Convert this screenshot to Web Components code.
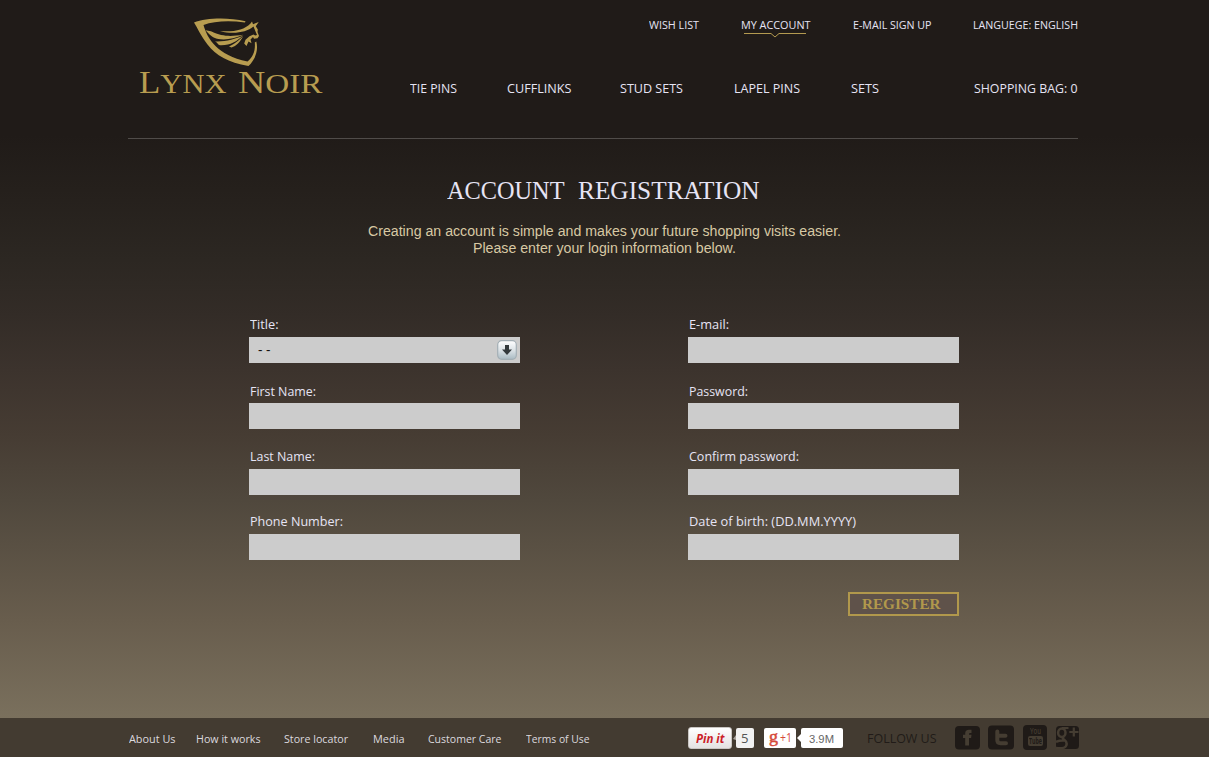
<!DOCTYPE html>
<html lang="en">
<head>
<meta charset="utf-8">
<title>Lynx Noir - Account Registration</title>
<style>
html,body{margin:0;padding:0}
body{font-family:"Open Sans",sans-serif;color:#e6e4f4;background:#201b18}
</style>
</head>
<body>
<lynx-page></lynx-page>
<script>
const define=(name,html,after)=>customElements.define(name,class extends HTMLElement{
  connectedCallback(){
    if(this.shadowRoot)return;
    this.attachShadow({mode:'open'}).innerHTML=typeof html==='function'?html(this):html;
    if(after)after(this);
  }
});

/* A single line of text condensed or expanded to the width in its w attribute */
define('fit-text',`<style>
:host{display:block;height:var(--line,20px);flex:none}
span{display:block;width:max-content;line-height:var(--line,20px);white-space:pre;transform-origin:0 0}
</style><span><slot></slot></span>`,el=>{
  const w=+el.getAttribute('w'),s=el.shadowRoot.querySelector('span');
  el.style.width=w+'px';
  const n=s.getBoundingClientRect().width;
  if(n)s.style.transform='scaleX('+(w/n)+')';
});

define('lynx-logo',`<style>
:host{display:block;width:200px;height:100px;color:#b89d50}
svg{display:block;margin:18px 0 0 65px}
.name{display:flex;align-items:baseline;margin:-2px 0 0 11px;font-family:"Liberation Serif",serif;font-size:28px;gap:11px}
fit-text{--line:34px} b{font-weight:400;font-size:32px}
</style>
<svg width="70" height="49" viewBox="0 0 70 49" fill="#b89d50">
<path d="M1 4.500C13 0 34-.8 52.500 3.200L52 4.400C36 2.500 21 3 10.500 7C14.500 21 24 37 54.500 43.500C60 39 62.500 33 61.800 24.500L63.300 23.500C66 34 61 42.500 55.500 48C35 44.500 23 37.500 14.500 26.500C8 18 4.500 10 1 4.500Z"/>
<path d="M27 13.200C42 14 51 12 57.500 5.500L59 3.500L60 6.200L65.700 4L62.800 8.300L64.800 11.500L64.500 14L66 18L64.500 20.200L61 20.800L60 19L57.500 21.500L58.500 25.200L55.500 23.500L53.500 28L51.200 25.500L52.500 21.700L56.500 18.200L60.500 16.500L62.200 17.500L64 17L61.500 11L60.500 8.500C53 14.500 41 16.500 27 13.200Z"/>
<path d="M12.500 12.200L18 13.300C30 19 38 18.500 50.500 16.800C40 21 32 22.500 24 20.700C18 19 16.500 16 12.500 12.200Z"/>
<path d="M22 23.400C33 23.800 42 21 50.500 17.500C43 23.500 38 27.300 28 27.200C24.500 27.200 25 24.500 22 23.400Z"/>
<path d="M36 28.500C43 25 46 22 50 18.500C47 24 43.500 28 38.500 29.400Z"/>
</svg>
<div class="name"><fit-text w="87.500"><b>L</b>YNX</fit-text><fit-text w="84.500"><b>N</b>OIR</fit-text></div>`);

define('nav-item',el=>`<style>
:host{display:block;position:relative;margin-left:${el.getAttribute('gap')||0}px}
svg{position:absolute;left:3px;top:17px}
</style><fit-text w="${el.getAttribute('w')}"><slot></slot></fit-text>
${el.hasAttribute('current')?'<svg width="62" height="6" fill="none" stroke="#b39a50"><path d="M0 1.500H27L31 5L35 1.500H62"/></svg>':''}`);

define('site-header',`<style>
:host{display:flex;box-sizing:border-box;width:950px;height:139px;margin-left:128px;border-bottom:1px solid #504c49}
lynx-logo{flex:none}
nav{display:flex}
.top{font-size:11.500px;margin:15px 0 0 321px}
.main{font-size:13.200px;margin:43px 0 0 82px}
</style>
<lynx-logo></lynx-logo>
<div>
<nav class="top"><nav-item w="50">WISH LIST</nav-item><nav-item gap="42" w="69.500" current>MY ACCOUNT</nav-item><nav-item gap="42.500" w="78.500">E-MAIL SIGN UP</nav-item><nav-item gap="41.500" w="105">LANGUEGE: ENGLISH</nav-item></nav>
<nav class="main"><nav-item w="47">TIE PINS</nav-item><nav-item gap="49.500" w="64.500">CUFFLINKS</nav-item><nav-item gap="48.500" w="63">STUD SETS</nav-item><nav-item gap="51" w="66">LAPEL PINS</nav-item><nav-item gap="51" w="28">SETS</nav-item><nav-item gap="95" w="103.500">SHOPPING BAG: 0</nav-item></nav>
</div>`);

define('form-field',el=>`<style>
:host{display:block;width:271px;font-size:13.200px}
fit-text{margin:0 0 ${el.getAttribute('gap')||3}px 1px}
.box{display:flex;box-sizing:border-box;height:26px;background:#ccc;color:#111;justify-content:space-between;align-items:center;padding:0 3px 0 9px}
</style><fit-text w="${el.getAttribute('w')}">${el.getAttribute('label')}</fit-text><div class="box"><slot></slot></div>`);

define('select-arrow',`<style>:host{display:block;height:20px}</style>
<svg width="20" height="20"><defs><linearGradient id="g" x2="0" y2="1"><stop stop-color="#fff"/><stop offset=".5" stop-color="#dce3e7"/><stop offset="1" stop-color="#a9bac3"/></linearGradient></defs>
<rect x=".7" y=".7" width="18.600" height="18.600" rx="4" fill="url(#g)" stroke="#a4afb5" stroke-width="1.200"/><path d="M8 5H12V9.500H15L10 15L5 9.500H8Z" fill="#343a3d"/></svg>`);

define('register-button',`<style>
:host{display:block;box-sizing:border-box;width:111px;height:24px;border:2px solid #b1984c;background:#5f524a;color:#b1984c;padding:0 0 0 12px;font:bold 14.500px "Liberation Serif",serif;--line:20px}
</style><fit-text w="78.500"><slot></slot></fit-text>`);

define('account-form',`<style>
:host{display:block;height:579px}
h1{display:flex;gap:13px;font:25.500px "Liberation Serif",serif;margin:0;padding:37px 0 0 447px;--line:30px}
.intro{font:14px "Liberation Sans",sans-serif;color:#d8c9a4;--line:17px;padding:17px 0 0 367.500px}
.second{margin-left:105px}
.grid{display:grid;grid-template-columns:271px 271px;column-gap:168px;grid-template-rows:49px 66px 66px 65px;align-items:end;margin:57px 0 0 249px}
.dash{width:14px;font-size:14px}
register-button{margin:32px 0 0 848px}
</style>
<h1><fit-text w="117.500">ACCOUNT</fit-text><fit-text w="181.500">REGISTRATION</fit-text></h1>
<div class="intro"><fit-text w="473">Creating an account is simple and makes your future shopping visits easier.</fit-text><fit-text class="second" w="263">Please enter your login information below.</fit-text></div>
<div class="grid">
<form-field label="Title:" w="28.500"><fit-text class="dash" w="12.500">- -</fit-text><select-arrow></select-arrow></form-field><form-field label="E-mail:" w="40"></form-field>
<form-field label="First Name:" w="66" gap="2"></form-field><form-field label="Password:" w="59" gap="2"></form-field>
<form-field label="Last Name:" w="65"></form-field><form-field label="Confirm password:" w="110"></form-field>
<form-field label="Phone Number:" w="93"></form-field><form-field label="Date of birth: (DD.MM.YYYY)" w="167"></form-field>
</div>
<register-button>REGISTER</register-button>`);

define('share-buttons',`<style>
:host{display:flex;height:22px;align-items:center}
div{box-sizing:border-box;background:#fff;border-radius:2px;height:20px;--line:20px;display:flex}
.pin{width:44px;height:22px;border-radius:3px;background:linear-gradient(#fff,#e4e2e2);border:1px solid #c9c6c3;color:#cb2027;font:italic bold 13px "Open Sans",sans-serif;padding-left:7px}
.count{width:18px;background:#f2f2f2;color:#555;font-size:13px;padding-left:5px}
.g{width:32px;margin-left:10px;color:#d64a3a;padding-left:5px}
.g .plus{margin-left:2px;font:12.500px "Open Sans",sans-serif;--line:19px}
.g .letter{font:17.500px "Liberation Serif",serif;--line:17px;-webkit-text-stroke:.5px #d64a3a}
.m{width:41.500px;color:#666;font:11.500px "Liberation Sans",sans-serif;--line:22px;padding-left:8px}
svg{display:block;flex:none}
</style>
<div class="pin"><fit-text w="28.500">Pin it</fit-text></div>
<svg width="4" height="8"><path d="M4 1L1 5L4 6Z" fill="#aaa59e"/></svg>
<div class="count"><fit-text w="7.500">5</fit-text></div>
<div class="g"><fit-text class="letter" w="9">g</fit-text><fit-text class="plus" w="12">+1</fit-text></div>
<svg width="5" height="10"><path d="M5 1L1 5L5 9Z" fill="#fff"/></svg>
<div class="m"><fit-text w="25">3.9M</fit-text></div>`);

define('social-icons',`<style>
:host{display:flex;height:25px;align-items:flex-start}
svg{display:block;flex:none}
.yt{display:grid;box-sizing:border-box;width:24px;height:24.500px;margin-left:9px;padding-top:1px;background:#1f1a17;border-radius:4px;color:#453d32;font:600 8.500px "Open Sans",sans-serif;justify-items:center;align-content:start;--line:10px}
.tube{width:15px;height:10px;background:#453d32;color:#1f1a17;border-radius:2px;display:flex;justify-content:center;font-size:8px;font-weight:700;--line:10px}
</style>
<svg width="25" height="25"><rect y="1" width="25" height="23.500" rx="4" fill="#1f1a17"/><path d="M10.200 20.500V13H8V9.700H10.200V8.200Q10.200 4.700 14 4.700H16.500V8H15Q14 8 14 9V9.700H16.500L16.100 13H14V20.500Z" fill="#453d32"/></svg>
<svg width="26" height="25" style="margin-left:8px"><rect y=".5" width="26" height="24" rx="4" fill="#1f1a17"/><path d="M9.300 6.500V15Q9.300 18.200 12.500 18.200H18M9.300 10.700H17.500" fill="none" stroke="#453d32" stroke-width="4" stroke-linecap="round"/></svg>
<div class="yt"><fit-text w="11">You</fit-text><div class="tube"><fit-text w="13">Tube</fit-text></div></div>
<svg width="23" height="25" style="margin-left:9px"><rect y="1" width="23" height="23" rx="3.500" fill="#1f1a17"/><g fill="none" stroke="#453d32"><ellipse cx="5.800" cy="7.800" rx="3.700" ry="4.200" stroke-width="2.500"/><path d="M6 3H12.500" stroke-width="2"/><path d="M8 11.500Q5.500 13 8 14.500Q12 17.500 10 21Q8.500 24 0 23M0 17Q4 15 8.500 15.500" stroke-width="2.500"/><path d="M17.800 2.500V11.500M13.300 7H22.500" stroke-width="2.200"/></g></svg>`);

define('site-footer',`<style>
:host{display:flex;box-sizing:border-box;height:39px;background:#433b31;padding-left:128px;font-size:11.400px}
nav{display:flex;padding-top:11px;width:560px;flex:none;color:#dcd9df}
share-buttons{margin-top:9px;width:155px;flex:none}
.follow{margin:10px 0 0 24px;font-size:13px;color:#211b18}
social-icons{margin:7px 0 0 18.500px}
</style>
<nav><nav-item gap=".5" w="46.500">About Us</nav-item><nav-item gap="21" w="64.500">How it works</nav-item><nav-item gap="23.500" w="64">Store locator</nav-item><nav-item gap="25" w="31.500">Media</nav-item><nav-item gap="23.500" w="73.500">Customer Care</nav-item><nav-item gap="24.500" w="63.500">Terms of Use</nav-item></nav>
<share-buttons></share-buttons><fit-text class="follow" w="69.500">FOLLOW US</fit-text><social-icons></social-icons>`);

define('lynx-page',`<style>
:host{display:block;width:1209px;height:757px;overflow:hidden;background:linear-gradient(#201b18 0,#201b18 135px,#25201c 190px,#2c2722 260px,#332c27 315px,#3c332d 370px,#463c33 435px,#50483d 500px,#685d4d 620px,#7a705d 718px)}
</style><site-header></site-header><account-form></account-form><site-footer></site-footer>`);
</script>
</body>
</html>
